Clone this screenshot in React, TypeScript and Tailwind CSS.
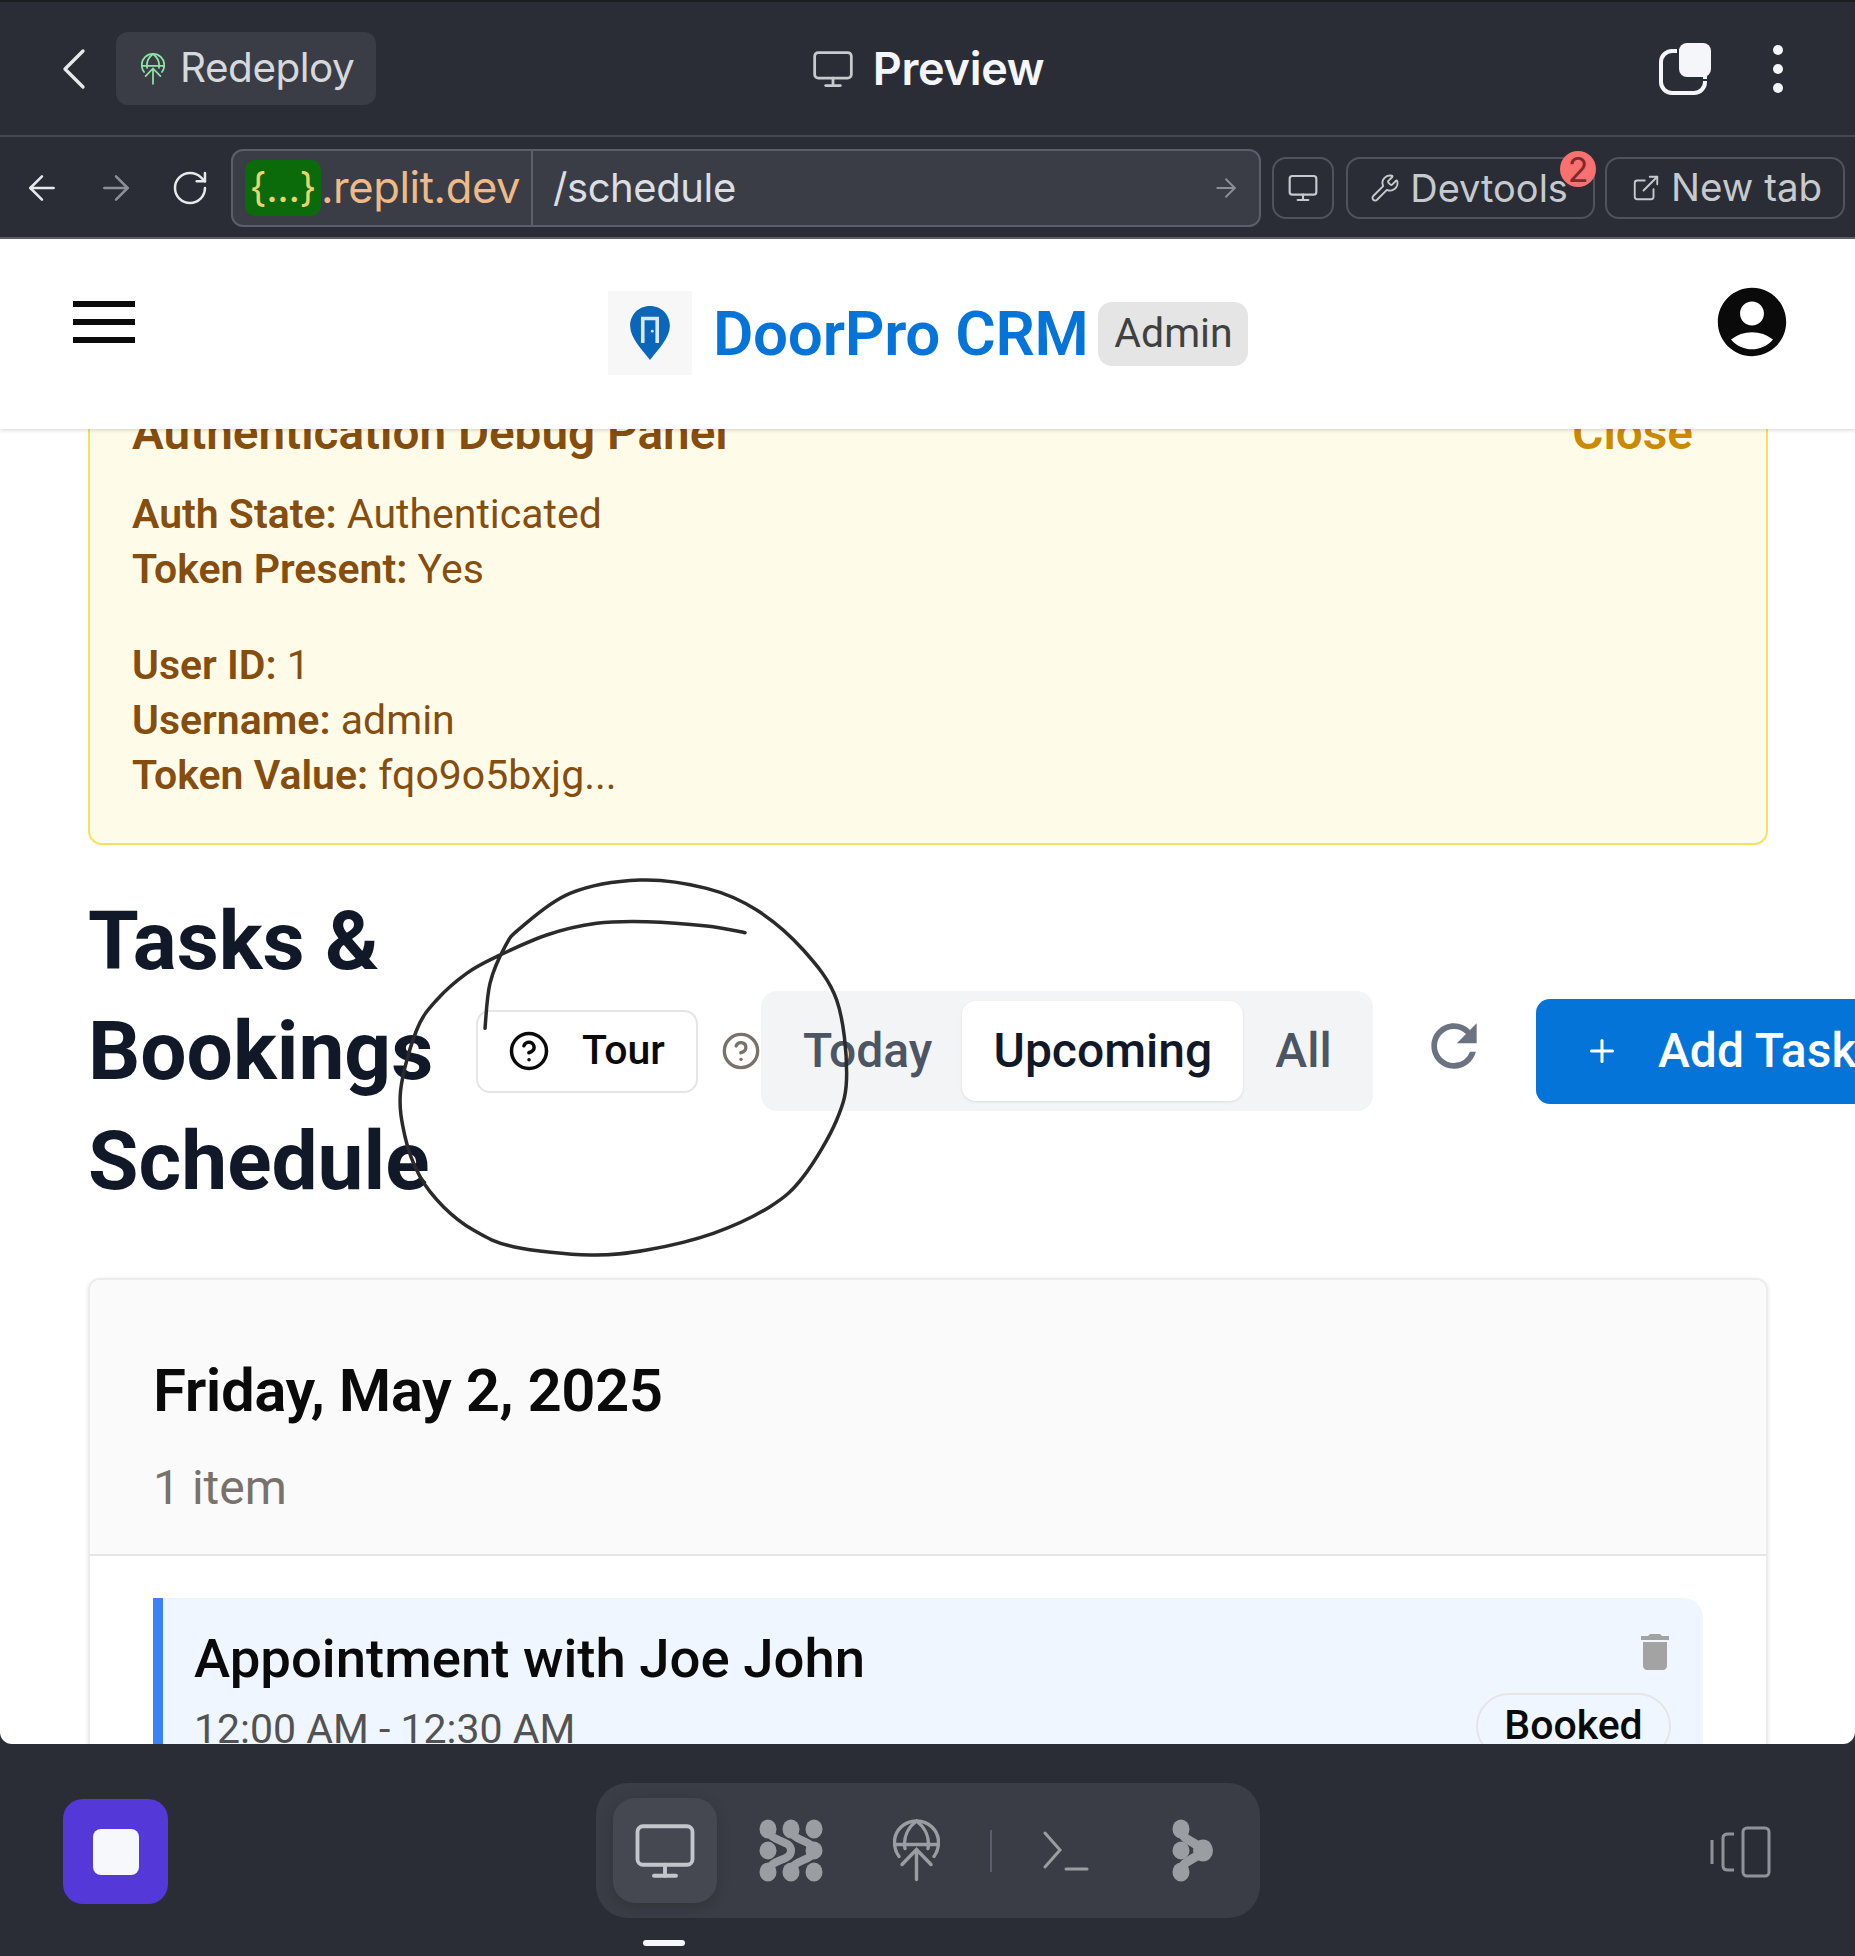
import { ArrowLeft, ArrowRight, ChevronLeft, CircleHelp, ExternalLink, Monitor, Plus, RotateCw, Wrench } from "lucide-react";
import { MdAccountCircle, MdDelete, MdRefresh } from "react-icons/md";

// points of the hand drawn circle, in zoomed coordinates (3x)
const scribble = [
  [315, 505], [330, 370], [375, 260], [420, 205], [570, 100], [780, 60], [980, 85], [1130, 150],
  [1270, 270], [1370, 420], [1400, 640], [1370, 780], [1270, 950], [1170, 1040], [1000, 1120],
  [800, 1170], [630, 1185], [400, 1160], [280, 1110], [190, 1040], [120, 950], [75, 830], [62, 690],
  [110, 510], [170, 420], [260, 340], [350, 290], [500, 225], [650, 190], [800, 185], [980, 198], [1095, 218],
];

function smoothPath(pts: number[][]) {
  let d = `M${pts[0][0]} ${pts[0][1]}`;
  for (let i = 0; i < pts.length - 1; i++) {
    const p0 = pts[Math.max(i - 1, 0)];
    const p1 = pts[i];
    const p2 = pts[i + 1];
    const p3 = pts[Math.min(i + 2, pts.length - 1)];
    d += ` C${p1[0] + (p2[0] - p0[0]) / 6} ${p1[1] + (p2[1] - p0[1]) / 6} ${p2[0] - (p3[0] - p1[0]) / 6} ${p2[1] - (p3[1] - p1[1]) / 6} ${p2[0]} ${p2[1]}`;
  }
  return d;
}

function GlobeUp({ className }: { className: string }) {
  return (
    <svg viewBox="0 0 47 62" fill="none" stroke="currentColor" strokeWidth="3.4" strokeLinecap="round" className={className}>
      <path d="M6 37C3 33 1.5 28 1.5 23C1.5 11 11 1.5 23.5 1.5S45.5 11 45.5 23C45.5 28 44 33 41 37" />
      <path d="M12 29C10 18 15 8 23.5 1.5C32 8 37 18 35 29" />
      <path d="M2 25H45" />
      <path d="M23.5 60V30M9 45L23.5 30L38 45" />
    </svg>
  );
}

function PanesIcon() {
  return (
    <svg viewBox="0 0 64 63" className="h-[63px] w-[64px] text-[#9a9ea3]" fill="currentColor">
      <path d="M9 10C11 24 32 20 32 31.5C32 43 11 39 9 53M32 10C34 24 54 20 54 31.5C54 43 34 39 32 53" fill="none" stroke="currentColor" strokeWidth="8" />
      <ellipse cx="9" cy="10" rx="8.5" ry="9.5" />
      <ellipse cx="32" cy="10" rx="8.5" ry="9.5" />
      <ellipse cx="55" cy="10" rx="8.5" ry="9.5" />
      <ellipse cx="9" cy="31.5" rx="8.5" ry="9" />
      <ellipse cx="55" cy="31.5" rx="8.5" ry="9" />
      <ellipse cx="9" cy="53" rx="8.5" ry="9.5" />
      <ellipse cx="32" cy="53" rx="8.5" ry="9.5" />
      <ellipse cx="55" cy="53" rx="8.5" ry="9.5" />
    </svg>
  );
}

function BranchIcon() {
  return (
    <svg viewBox="0 0 41 63" className="h-[63px] w-[41px] text-[#9a9ea3]" fill="currentColor">
      <path d="M9 10C11 23 21 20 31 31.5C21 43 11 40 9 53" fill="none" stroke="currentColor" strokeWidth="9" />
      <ellipse cx="9" cy="10" rx="8.5" ry="9.5" />
      <ellipse cx="9" cy="53" rx="8.5" ry="9.5" />
      <ellipse cx="31" cy="31.5" rx="10" ry="11" />
      <ellipse cx="9" cy="31.5" rx="8.5" ry="9" />
    </svg>
  );
}

function DoorPin() {
  return (
    <svg viewBox="0 0 48 62" className="h-[56px] w-[44px]">
      <path d="M24 1C11 1 2 11 2 23C2 37 16 50 24 61C32 50 46 37 46 23C46 11 37 1 24 1Z" fill="#0a66b8" />
      <path d="M14 42V13H34V42H30V17H18V42Z" fill="#dbe9f6" />
      <circle cx="26.5" cy="29" r="1.5" fill="#dbe9f6" />
    </svg>
  );
}

function UrlButton({ children, className }: { children: React.ReactNode; className: string }) {
  return (
    <div className={`flex h-[62px] items-center rounded-[14px] border-2 border-[#4e535e] text-[38px] text-[#c6c9ce] ${className}`}>
      {children}
    </div>
  );
}

export default function App() {
  return (
    <div className="relative flex h-[1956px] w-[1855px] flex-col overflow-hidden bg-[#2a2d35] font-['Roboto',sans-serif]">
      {/* Top bar */}
      <div className="grid h-[137px] shrink-0 grid-cols-[1fr_auto_1fr] items-center border-b-2 border-t-2 border-b-[#454952] border-t-[#1c1e23] pl-[38px] pr-[72px] font-['Inter',sans-serif]">
        <div className="flex items-center gap-[6px]">
          <ChevronLeft className="h-[72px] w-[72px] text-[#e8e9ec]" strokeWidth={1.1} />
          <div className="flex h-[73px] w-[260px] items-center gap-[15px] rounded-[12px] bg-[#3a3d45] pl-[25px]">
            <GlobeUp className="h-[32px] w-[24px] text-[#8fe3a3]" />
            <span className="text-[40.5px] tracking-[-0.5px] text-[#d6d8dc]">Redeploy</span>
          </div>
        </div>
        <div className="ml-[34px] flex items-center gap-[18px]">
          <Monitor className="h-[44px] w-[44px] text-[#c8cad0]" strokeWidth={1.5} />
          <span className="text-[45px] font-semibold tracking-[-0.3px] text-[#f4f6fa]">Preview</span>
        </div>
        <div className="flex items-center justify-end gap-[62px]">
          <svg viewBox="0 0 52 52" className="h-[52px] w-[52px]">
            <rect x="2" y="8" width="44" height="42" rx="11" fill="none" stroke="#f4f6fa" strokeWidth="4" />
            <rect x="20" y="0" width="32" height="34" rx="8" fill="#f4f6fa" />
            <path d="M18 2H20V36H52V38H18Z" fill="#2a2d35" />
          </svg>
          <div className="flex flex-col gap-[9px]">
            <div className="h-[10px] w-[10px] rounded-full bg-[#f4f6fa]" />
            <div className="h-[10px] w-[10px] rounded-full bg-[#f4f6fa]" />
            <div className="h-[10px] w-[10px] rounded-full bg-[#f4f6fa]" />
          </div>
        </div>
      </div>

      {/* Url bar */}
      <div className="flex h-[102px] shrink-0 items-center border-b-2 border-[#5a5f6b] pl-[22px] pr-[10px] pt-[2px] font-['Inter',sans-serif]">
        <ArrowLeft className="h-[40px] w-[40px] text-[#e8e9ec]" strokeWidth={1.5} />
        <ArrowRight className="ml-[34px] h-[40px] w-[40px] text-[#8b8f97]" strokeWidth={1.5} />
        <RotateCw className="ml-[34px] h-[40px] w-[40px] text-[#e8e9ec]" strokeWidth={1.5} />
        <div className="ml-[21px] flex h-[78px] w-[1031px] items-center rounded-[12px] border-2 border-[#5a5f6b] bg-[#3a3d45]">
          <div className="flex h-full w-[300px] items-center border-r-2 border-[#5a5f6b] pl-[12px] text-[43.5px] tracking-[-0.4px] text-[#efba85]">
            <span className="flex h-[56px] w-[76px] items-center justify-center rounded-[10px] bg-[#0b6b0b] text-[40px] text-[#e9d56b]">{"{...}"}</span>
            .replit.dev
          </div>
          <span className="ml-[20px] text-[40px] tracking-[-0.4px] text-[#dcdee2]">/schedule</span>
          <ArrowRight className="ml-auto mr-[18px] h-[30px] w-[30px] text-[#8b8f97]" strokeWidth={1.5} />
        </div>
        <UrlButton className="ml-[11px] w-[62px] justify-center">
          <Monitor className="h-[32px] w-[32px]" strokeWidth={1.6} />
        </UrlButton>
        <UrlButton className="relative ml-[12px] w-[249px] gap-[10px] pl-[22px]">
          <Wrench className="h-[30px] w-[30px]" strokeWidth={1.5} />
          <span>Devtools</span>
          <span className="absolute right-[-3px] top-[-8px] flex h-[36px] w-[36px] items-center justify-center rounded-full bg-[#f87171] text-[34px] text-[#7f2a2a]">2</span>
        </UrlButton>
        <UrlButton className="ml-[10px] w-[240px] gap-[10px] pl-[24px]">
          <ExternalLink className="h-[30px] w-[30px]" strokeWidth={1.5} />
          <span className="text-[38.5px]">New tab</span>
        </UrlButton>
      </div>

      {/* App viewport */}
      <div className="flex h-[1505px] shrink-0 flex-col overflow-hidden rounded-b-[12px] bg-white">
        <header className="relative z-10 flex h-[190px] shrink-0 items-start bg-white pl-[73px] pr-[62px] shadow-[0_1px_4px_rgba(0,0,0,0.18)]">
          <div className="mt-[62px] flex h-[42px] w-[62px] flex-col justify-between">
            <div className="h-[6px] bg-[#0a0a0a]" />
            <div className="h-[6px] bg-[#0a0a0a]" />
            <div className="h-[6px] bg-[#0a0a0a]" />
          </div>
          <div className="ml-[473px] mt-[52px] flex h-[84px] items-center">
            <div className="flex h-[84px] w-[84px] items-center justify-center bg-[#f7f7f7]">
              <DoorPin />
            </div>
            <span className="ml-[21px] text-[62px] font-semibold tracking-[-0.3px] text-[#0474d8]">DoorPro CRM</span>
            <span className="ml-[10px] mt-[1px] flex h-[64px] w-[150px] items-center justify-center rounded-[14px] bg-[#e5e5e5] text-[41px] text-[#404040]">Admin</span>
          </div>
          <MdAccountCircle className="ml-auto mt-[42px] h-[82px] w-[82px] text-[#0a0a0a]" />
        </header>

        <main className="relative flex flex-col pl-[88px] pr-[87px]">
          {/* Debug panel, scrolled under the header */}
          <section className="mt-[-48px] rounded-b-[14px] rounded-t-[14px] border-2 border-[#f6e05e] bg-[#fefce8] px-[42px] pb-[40px] pt-[18px] text-[#854d0e]">
            <div className="flex items-center justify-between pr-[31px] text-[47.7px] font-semibold leading-[64px]">
              <span>Authentication Debug Panel</span>
              <span className="text-[#ca8a04]">Close</span>
            </div>
            <div className="mt-[22px] text-[41px] leading-[55px]">
              <p><strong className="font-semibold">Auth State:</strong> Authenticated</p>
              <p><strong className="font-semibold">Token Present:</strong> Yes</p>
              <p className="mt-[41px]"><strong className="font-semibold">User ID:</strong> 1</p>
              <p><strong className="font-semibold">Username:</strong> admin</p>
              <p><strong className="font-semibold">Token Value:</strong> fqo9o5bxjg...</p>
            </div>
          </section>

          {/* Title row */}
          <div className="mt-[41px] flex items-center whitespace-nowrap">
            <h1 className="w-[388px] shrink-0 whitespace-normal text-[82px] font-bold leading-[110px] text-[#111827]">Tasks &amp; Bookings Schedule</h1>
            <button className="flex h-[83px] w-[222px] shrink-0 items-center gap-[32px] rounded-[14px] border-2 border-[#e5e5e5] bg-white pl-[30px] text-[41px] font-medium text-[#0a0a0a]">
              <CircleHelp className="h-[42px] w-[42px]" strokeWidth={2} />
              Tour
            </button>
            <CircleHelp className="ml-[23px] h-[40px] w-[40px] shrink-0 text-[#78716c]" strokeWidth={2} />
            <div className="flex h-[120px] w-[612px] shrink-0 items-center gap-[30px] rounded-[16px] bg-[#f3f4f6] pl-[42px] text-[48px] font-medium text-[#4b5563]">
              <span>Today</span>
              <span className="flex h-[100px] w-[281px] items-center justify-center rounded-[14px] bg-white text-[#111827] shadow-[0_1px_3px_rgba(0,0,0,0.1)]">Upcoming</span>
              <span className="ml-[2px]">All</span>
            </div>
            <MdRefresh className="mb-[10px] ml-[47px] h-[68px] w-[68px] shrink-0 text-[#6b7280]" />
            <button className="ml-[48px] flex h-[105px] w-[340px] shrink-0 items-center gap-[38px] rounded-[14px] bg-[#0474d8] pl-[48px] text-[48px] font-medium text-white">
              <Plus className="h-[36px] w-[36px]" strokeWidth={2} />
              Add Task
            </button>
          </div>

          {/* Schedule card */}
          <section className="mt-[62px] overflow-hidden rounded-[12px] border-2 border-[#ececec] bg-white shadow-[0_1px_4px_rgba(0,0,0,0.12)]">
            <div className="h-[276px] border-b-2 border-[#e5e5e5] bg-[#fafafa] px-[63px] pt-[71px]">
              <h2 className="text-[60px] font-semibold leading-[80px] tracking-[-0.5px] text-[#0a0a0a]">Friday, May 2, 2025</h2>
              <p className="mt-[27px] text-[48px] leading-[60px] text-[#78716c]">1 item</p>
            </div>
            <div className="pl-[63px] pr-[63px] pt-[42px]">
              <div className="flex h-[300px] justify-between rounded-r-[20px] border-l-[10px] border-[#3b82f6] bg-[#eff6ff] pl-[31px] pr-[32px] pt-[25px]">
                <div>
                  <h3 className="text-[54.5px] font-medium leading-[70px] text-[#0a0a0a]">Appointment with Joe John</h3>
                  <p className="mt-[8px] text-[41px] leading-[56px] text-[#525252]">12:00 AM - 12:30 AM</p>
                </div>
                <div className="flex flex-col items-end">
                  <MdDelete className="mr-[-8px] mt-[5px] h-[48px] w-[48px] text-[#a3a3a3]" />
                  <span className="mt-[17px] flex h-[66px] w-[195px] items-center justify-center rounded-full border-2 border-[#e5e5e5] text-[41px] font-medium text-[#0a0a0a]">Booked</span>
                </div>
              </div>
            </div>
          </section>

          {/* Hand drawn circle over the page */}
          <svg viewBox="0 0 1500 1260" fill="none" className="pointer-events-none absolute left-[380px] top-[431px] h-[420px] w-[500px]">
            <path d={smoothPath(scribble)} stroke="#2a2a2a" strokeWidth="10.5" strokeLinecap="round" />
          </svg>
        </main>
      </div>

      {/* Bottom bar */}
      <div className="relative flex flex-1 items-start pl-[63px] pr-[84px] pt-[39px]">
        <div className="mt-[16px] flex h-[105px] w-[105px] items-center justify-center rounded-[20px] bg-[#5539d8]">
          <div className="h-[46px] w-[46px] rounded-[8px] bg-[#f6f8fc]" />
        </div>
        <div className="ml-[428px] flex h-[135px] w-[664px] items-center rounded-[32px] bg-[#3a3d45] pl-[17px]">
          <div className="flex h-[105px] w-[104px] items-center justify-center rounded-[22px] bg-[#454851] shadow-[0_4px_14px_rgba(0,0,0,0.15)]">
            <Monitor className="h-[66px] w-[66px] text-[#c3c6cd]" strokeWidth={1.4} />
          </div>
          <div className="ml-[42px]"><PanesIcon /></div>
          <GlobeUp className="ml-[70px] h-[63px] w-[47px] text-[#9a9ea3]" />
          <div className="ml-[50px] h-[42px] w-[2px] bg-[#5a5f6b]" />
          <svg viewBox="0 0 46 40" fill="none" stroke="#9a9ea3" strokeWidth="3" strokeLinecap="round" className="ml-[51px] h-[40px] w-[46px]">
            <path d="M2 2L17 19L2 36" />
            <path d="M23 38H44" />
          </svg>
          <div className="ml-[83px]"><BranchIcon /></div>
        </div>
        <svg viewBox="0 0 61 52" fill="none" stroke="#8f9399" strokeWidth="3" className="ml-auto mt-[43px] h-[52px] w-[61px]">
          <rect x="33" y="2" width="26" height="48" rx="4" />
          <path d="M24 8H18C14 8 13 10 13 12V40C13 42 14 44 18 44H24" />
          <path d="M2 14V38" />
        </svg>
        <div className="absolute bottom-[10px] left-[643px] h-[6px] w-[42px] rounded-full bg-[#f6f8fc]" />
      </div>
    </div>
  );
}
